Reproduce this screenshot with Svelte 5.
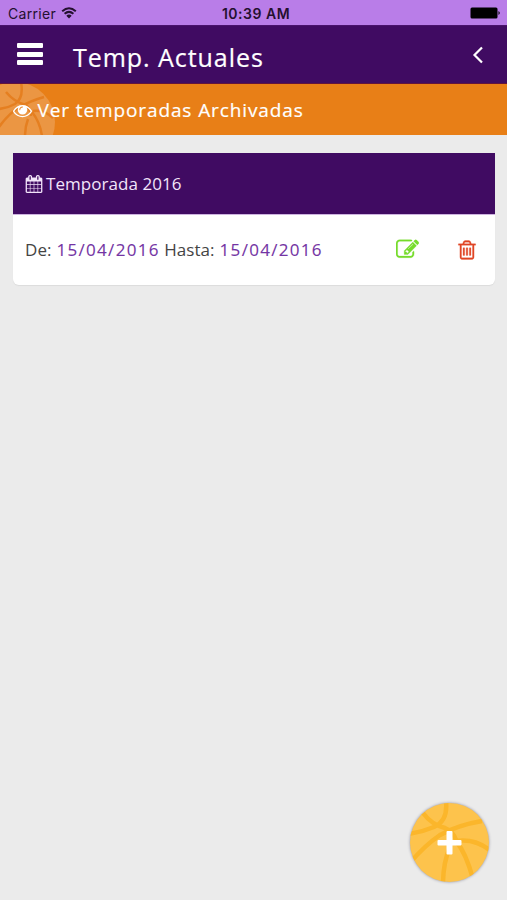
<script>
  const icons = {
    eye: 'M1664 960q-152-236-381-353 61 104 61 225 0 185-131.5 316.5t-316.5 131.5-316.5-131.5-131.5-316.5q0-121 61-225-229 117-381 353 133 205 333.5 326.5t434.5 121.5 434.5-121.5 333.5-326.5zm-720-384q0-20-14-34t-34-14q-125 0-214.5 89.5t-89.5 214.5q0 20 14 34t34 14 34-14 14-34q0-86 61-147t147-61q20 0 34-14t14-34zm848 384q0 34-20 69-140 230-376.5 368.5t-499.5 138.5-499.5-139-376.5-368q-20-35-20-69t20-69q140-229 376.5-368t499.5-139 499.5 139 376.5 368q20 35 20 69z',
    calendar: 'M192 1664h288v-288h-288v288zm352 0h320v-288h-320v288zm-352-352h288v-320h-288v320zm352 0h320v-320h-320v320zm-352-384h288v-288h-288v288zm736 736h320v-288h-320v288zm-384-736h320v-288h-320v288zm768 736h288v-288h-288v288zm-384-352h320v-320h-320v320zm-352-864v-288q0-13-9.5-22.5t-22.5-9.5h-64q-13 0-22.5 9.5t-9.5 22.5v288q0 13 9.5 22.5t22.5 9.5h64q13 0 22.5-9.5t9.5-22.5zm736 864h288v-320h-288v320zm-384-384h320v-288h-320v288zm384 0h288v-288h-288v288zm32-480v-288q0-13-9.5-22.5t-22.5-9.5h-64q-13 0-22.5 9.5t-9.5 22.5v288q0 13 9.5 22.5t22.5 9.5h64q13 0 22.5-9.5t9.5-22.5zm384-64v1280q0 52-38 90t-90 38h-1408q-52 0-90-38t-38-90v-1280q0-52 38-90t90-38h128v-96q0-66 47-113t113-47h64q66 0 113 47t47 113v96h384v-96q0-66 47-113t113-47h64q66 0 113 47t47 113v96h128q52 0 90 38t38 90z',
    edit: 'M888 1184l116-116-152-152-116 116v56h96v96h56zm440-720q-16-16-33 1l-350 350q-17 17-1 33t33-1l350-350q17-17 1-33zm80 594v190q0 119-84.5 203.5t-203.5 84.5h-832q-119 0-203.5-84.5t-84.5-203.5v-832q0-119 84.5-203.5t203.5-84.5h832q63 0 117 25 15 7 18 23 3 17-9 29l-49 49q-14 14-32 8-23-6-45-6h-832q-66 0-113 47t-47 113v832q0 66 47 113t113 47h832q66 0 113-47t47-113v-126q0-13 9-22l64-64q15-15 35-7t20 29zm-96-738l288 288-672 672h-288v-288zm444 132l-92 92-288-288 92-92q28-28 68-28t68 28l152 152q28 28 28 68t-28 68z',
    trash: 'M704 736v576q0 14-9 23t-23 9h-64q-14 0-23-9t-9-23v-576q0-14 9-23t23-9h64q14 0 23 9t9 23zm256 0v576q0 14-9 23t-23 9h-64q-14 0-23-9t-9-23v-576q0-14 9-23t23-9h64q14 0 23 9t9 23zm256 0v576q0 14-9 23t-23 9h-64q-14 0-23-9t-9-23v-576q0-14 9-23t23-9h64q14 0 23 9t9 23zm128 724v-948h-896v948q0 22 7 40.5t14.5 27 10.5 8.5h832q3 0 10.5-8.5t14.5-27 7-40.5zm-672-1076h448l-48-117q-7-9-17-11h-317q-10 2-17 11zm928 32v64q0 14-9 23t-23 9h-96v948q0 83-47 143.5t-113 60.5h-832q-66 0-113-58.5t-47-141.5v-952h-96q-14 0-23-9t-9-23v-64q0-14 9-23t23-9h309l70-167q15-37 54-63t79-26h320q40 0 79 26t54 63l70 167h309q14 0 23 9t9 23z'
  };
  const seasons = [{ name: 'Temporada 2016', from: '15/04/2016', to: '15/04/2016' }];
</script>

{#snippet icon(name)}
  <svg class="icon {name}" viewBox="0 0 1792 1792" aria-hidden="true"><path d={icons[name]} /></svg>
{/snippet}

<div class="screen">
  <div class="status">
    <div class="carrier">
      <span>Carrier</span>
      <svg class="wifi" viewBox="0 0 16 12" aria-hidden="true">
        <path d="M1.200 4.200Q8 -1.700 14.800 4.200M3.600 6.800Q8 3 12.400 6.800" />
        <path class="dot" d="M5.300 8.700Q8 6.400 10.700 8.700L8 11.500Z" />
      </svg>
    </div>
    <strong>10:39 AM</strong>
    <div class="power"><svg viewBox="0 0 31 12" aria-hidden="true"><rect x="0.500" y="0.500" width="27" height="11" rx="1.500" /><path d="M28.500 4Q31 6 28.500 8Z" /></svg></div>
  </div>

  <header>
    <button class="menu" aria-label="Menú"><i></i><i></i><i></i></button>
    <h1>Temp. Actuales</h1>
    <button class="back" aria-label="Volver"><svg viewBox="0 0 12 18"><path d="M10 1.500L2.500 9L10 16.500" /></svg></button>
  </header>

  <button class="archive">
    <svg class="ball" viewBox="0 0 56 51" aria-hidden="true">
      <circle cx="15" cy="38" r="40" />
      <path class="seams" d="M-1 25Q8 24 15 20Q24 14 21 -2M6 8Q14 18 26 21Q30 24 31 32M-1 43Q10 28 20 23Q30 17 44 13M28 35Q25 43 25 52M32 28Q40 38 42 52M33 27Q44 25 53 34" />
    </svg>
    {@render icon('eye')}
    <span>Ver temporadas Archivadas</span>
  </button>

  <main>
    {#each seasons as season}
      <article>
        <h2>{@render icon('calendar')}<span>{season.name}</span></h2>
        <div class="row">
          <p><span>De:</span><b>{season.from}</b><span>Hasta:</span><b>{season.to}</b></p>
          <button aria-label="Editar">{@render icon('edit')}</button>
          <button aria-label="Eliminar">{@render icon('trash')}</button>
        </div>
      </article>
    {/each}
  </main>

  <button class="add" aria-label="Añadir">
    <svg viewBox="0 0 80 80">
      <path d="M-1 31Q12 29 24 24Q38 18 36 -1M13 10Q22 22 35 25Q43 28 46 37M-1 61Q14 43 30 32Q48 22 72 18M40 44Q33 60 33 81M46 38Q56 50 63 76M46 38Q65 35 81 48" />
      <path class="plus" d="M37.500 28h4a1 1 0 0 1 1 1v8h8a1 1 0 0 1 1 1v3.500a1 1 0 0 1-1 1h-8v8a1 1 0 0 1-1 1h-4a1 1 0 0 1-1-1v-8h-8a1 1 0 0 1-1-1v-3.500a1 1 0 0 1 1-1h8v-8a1 1 0 0 1 1-1z" />
    </svg>
  </button>
</div>

<style>
  .screen { position: relative; height: 900px; background: #ebebeb; font-family: "Open Sans", sans-serif; overflow: hidden; }
  .screen * { box-sizing: border-box; }
  button { border: 0; margin: 0; padding: 0; background: none; font: inherit; color: inherit; text-align: left; }
  svg { display: block; flex: none; }
  .icon { fill: currentColor; }

  .status { height: 25px; background: #b97de8; display: grid; grid-template-columns: 1fr auto 1fr; align-items: center; padding: 2px 6px 0 8px; color: #24102f; font-family: Inter, sans-serif; font-size: 14px; line-height: 20px; }
  .status strong { font-size: 14px; font-weight: 600; letter-spacing: 0.500px; margin-left: 3px; }
  .carrier { display: flex; align-items: center; gap: 5px; letter-spacing: 0.300px; }
  .wifi { width: 16px; height: 12px; fill: none; stroke: #24102f; stroke-width: 2; margin-top: -2px; }
  .wifi .dot { fill: #24102f; stroke: none; }
  .power { display: flex; justify-content: flex-end; margin-top: -1px; }
  .power svg { width: 31px; height: 12px; }

  header { height: 59px; background: #400b62; color: #fff; display: flex; align-items: center; padding: 0 23px 0 17px; border-top: 1px solid #4a126d; border-bottom: 1px solid #63143d; }
  .menu { width: 26px; height: 22px; display: flex; flex-direction: column; justify-content: space-between; margin-bottom: 1px; }
  .menu i { height: 5px; background: #fff; border-radius: 1px; }
  h1 { flex: 1; margin: 5px 0 0 30px; font-size: 25px; line-height: 34px; font-weight: 400; letter-spacing: 0.950px; -webkit-text-stroke: 0.200px #fff; }
  .back svg { width: 12px; height: 18px; fill: none; stroke: #fff; stroke-width: 2.200; }

  .archive { position: relative; width: 100%; height: 51px; background: #e87f17; color: #fff; display: flex; align-items: center; gap: 5.500px; padding: 1px 0 0 13px; font-size: 19px; letter-spacing: 0.890px; overflow: hidden; }
  .archive span, .archive .icon { position: relative; }
  .archive span { -webkit-text-stroke: 0.200px #fff; }
  .archive .ball { position: absolute; left: 0; top: 0; width: 56px; height: 51px; fill: #eb9643; }
  .ball .seams { fill: none; stroke: #e57f20; stroke-width: 2.500; }
  .eye { width: 19px; height: 19px; }

  main { padding: 18px 12px 0 13px; }
  article { height: 132px; background: #fff; border-radius: 0 0 6px 6px; box-shadow: 0 1px 1px #dcdcdc; }
  h2 { height: 62px; margin: 0; padding: 0 12px; background: #400b62; border-bottom: 1px solid #cdb3df; color: #f2e4fa; display: flex; align-items: center; gap: 3px; font-size: 17px; font-weight: 400; letter-spacing: 0.050px; }
  .calendar { width: 18px; height: 18px; }
  .row { height: 69px; display: flex; align-items: center; padding: 0 17px 0 12px; }
  p { flex: 1; display: flex; gap: 5px; margin: 0; font-size: 17px; color: #444; white-space: nowrap; letter-spacing: 0.050px; }
  b { font-weight: 400; color: #7434a4; letter-spacing: 1.300px; -webkit-text-stroke: 0.100px #7434a4; margin-right: -0.500px; }
  .edit { width: 23px; height: 23px; color: #76dc2c; }
  .trash { width: 22px; height: 22px; color: #e04524; margin-left: 37px; }
  .edit path, .trash path { stroke: currentColor; stroke-width: 22; }

  .add { position: absolute; left: 410px; top: 803px; width: 79px; height: 79px; border-radius: 50%; background: #fdc34c; overflow: hidden; box-shadow: 0 0 3px #8c8c9c; }
  .add svg { width: 80px; height: 80px; fill: none; stroke: #fbb62b; stroke-width: 4.500; }
  .add .plus { fill: #fff; stroke: none; }
</style>
